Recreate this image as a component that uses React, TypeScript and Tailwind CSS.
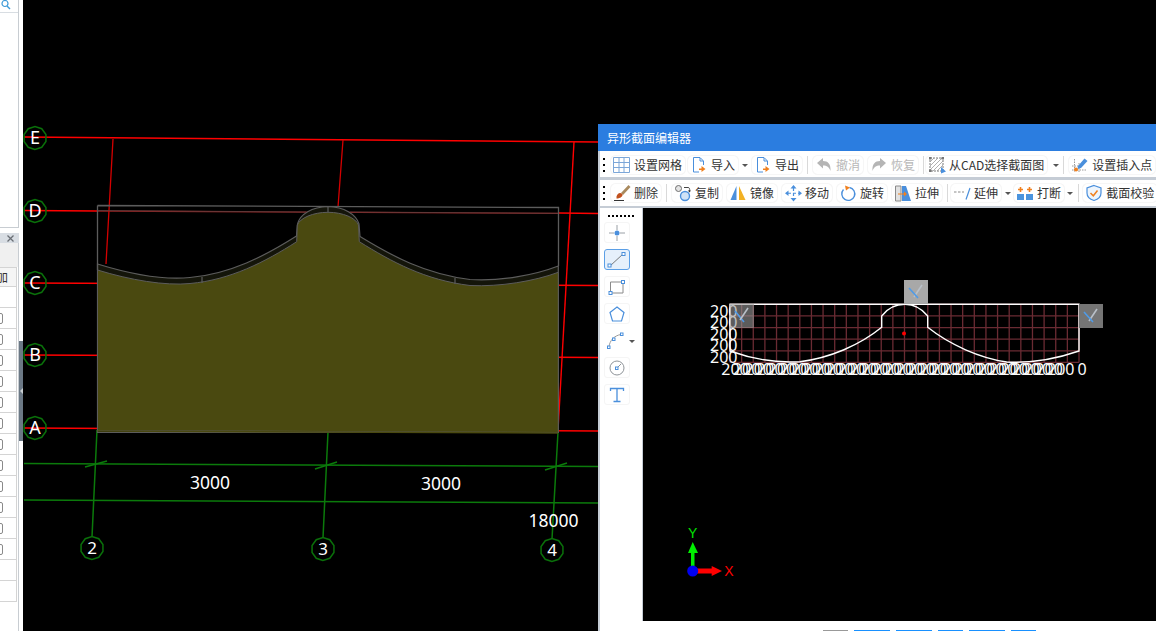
import React from "react";

const FONT = "[font-family:'Noto_Sans_CJK_SC','Noto_Sans',sans-serif]";
const BLUE = "#4a8fdc";
const ORANGE = "#f0801f";

function Ic({ children }: { children: React.ReactNode }) {
  return (
    <svg viewBox="0 0 16 16" className="block w-[16px] h-[16px] overflow-visible shrink-0">
      {children}
    </svg>
  );
}

const DocArrow = () => (
  <Ic>
    <path d="M2.5 .5H9L12.5 4V8M2.5 .5V15H8" fill="none" stroke={BLUE} />
    <path d="M9 1V4H12" fill="none" stroke={BLUE} />
    <path d="M8 11.5H10.5V9L14.5 12L10.5 15V13H8Z" fill={ORANGE} />
  </Ic>
);

const icons: Record<string, React.ReactNode> = {
  grid: (
    <Ic>
      <path d="M-.5 .5H15.5V15.5H-.5ZM5 .5V15.5M10 .5V15.5M-.5 5.5H15.5M-.5 10.5H15.5" fill="none" stroke="#7ba6d8" />
    </Ic>
  ),
  doc: <DocArrow />,
  undo: (
    <Ic>
      <path d="M1 6L7 1V4C12 4 15 7 14.5 14C13 10 11 8.5 7 8.5V11.5Z" fill="#b5b5b5" />
    </Ic>
  ),
  redo: (
    <Ic>
      <path d="M15 6L9 1V4C4 4 1 7 1.5 14C3 10 5 8.5 9 8.5V11.5Z" fill="#b5b5b5" />
    </Ic>
  ),
  cad: (
    <Ic>
      <path d="M1 1H14V14H1Z" fill="none" stroke="#7b7b7b" strokeDasharray="2 1" />
      <path d="M1 5L5 1M1 9L9 1M1 13L13 1M4 14L14 4M8 14L14 8" stroke="#9a9a9a" strokeWidth=".8" />
      <path d="M0 0h2.500v2.500H0ZM12.500 0H15v2.500h-2.500ZM0 12.500h2.500V15H0Z" fill="#777" />
      <path d="M12 10L17 14.500L12 16.500Z" fill={BLUE} />
    </Ic>
  ),
  insert: (
    <Ic>
      <path d="M2.500 2V15M7 6V15M0 9H10M0 13H14" stroke="#9a9a9a" strokeDasharray="1.500 1" />
      <path d="M6 9L12.500 1.500L15.500 4L9 11L5.500 12Z" fill={BLUE} />
      <circle cx="4" cy="12.500" r="2" fill={ORANGE} />
    </Ic>
  ),
  del: (
    <Ic>
      <path d="M7 8L14.500 0L16.500 2L9 10Z" fill="#a98a5e" />
      <path d="M2.500 11.500C3.500 8 6.500 7 8.500 9.500C9 11 6.500 13.500 2.500 13.500Z" fill="#c2521f" />
      <path d="M0 15.500H10" stroke="#333" />
    </Ic>
  ),
  copy: (
    <Ic>
      <circle cx="3.500" cy="3.500" r="3" fill="#e4e4e4" stroke="#6f6f6f" />
      <circle cx="10" cy="11" r="4.500" fill="#cfe2f6" stroke={BLUE} strokeWidth="1.400" />
      <path d="M9 2.500H13C14.500 2.500 15 4 14.500 6" fill="none" stroke="#444" />
      <path d="M12.800 5.500L14.500 7.500L16 5.500Z" fill="#333" />
    </Ic>
  ),
  mirror: (
    <Ic>
      <path d="M6.500 1L.5 15H6.500Z" fill={BLUE} />
      <path d="M9 1L15.500 15H9Z" fill="#f2b124" />
    </Ic>
  ),
  move: (
    <Ic>
      <path d="M8.500 0L11.500 3.500H5.500ZM8.500 16.500L5.500 13H11.500ZM0 8.250L3.500 5.500V11ZM17 8.250L13.500 5.500V11Z" fill={BLUE} />
      <path d="M8.500 3V13.500M3 8.250H14" stroke={BLUE} strokeWidth="1.200" strokeDasharray="3 2" />
    </Ic>
  ),
  rotate: (
    <Ic>
      <path d="M9.500 2.500A6.500 6.500 0 1 1 3.500 4.500" fill="none" stroke={BLUE} strokeWidth="1.400" />
      <path d="M5 .5L10 2.500L6 5.500Z" fill={ORANGE} />
    </Ic>
  ),
  stretch: (
    <Ic>
      <path d="M.5 1H6V16H.5Z" fill="#e2e2e2" stroke="#8a8a8a" />
      <path d="M7 1H11L16 16H7Z" fill={BLUE} />
      <path d="M3 8.500H9V6.500L12 9L9 11.500V9.500H3Z" fill={ORANGE} />
    </Ic>
  ),
  extend: (
    <Ic>
      <path d="M0 7H10" stroke="#8a8a8a" strokeDasharray="2.500 1.500" />
      <path d="M12 14.500L16 3" stroke={BLUE} strokeWidth="1.200" />
    </Ic>
  ),
  breakIc: (
    <Ic>
      <path d="M0 9H7V15H0ZM9 9H16V15H9Z" fill="#4a94de" />
      <path d="M3.500 2V7M1 4.500H6M12.500 2V7M10 4.500H15" stroke={ORANGE} strokeWidth="1.600" />
    </Ic>
  ),
  shield: (
    <Ic>
      <path d="M8 .5L15 3V8C15 12 11.500 14.500 8 15.500C4.500 14.500 1 12 1 8V3Z" fill="#eef5fc" stroke={BLUE} strokeWidth="1.200" />
      <path d="M4.500 8L7.300 10.800L11.500 5.500" fill="none" stroke={ORANGE} strokeWidth="1.500" />
    </Ic>
  ),
};

function Grip() {
  return (
    <div className="ml-[3px] w-[2px] h-[14px] flex flex-col justify-between shrink-0">
      <i className="block w-[2px] h-[2px] bg-black" />
      <i className="block w-[2px] h-[2px] bg-black" />
      <i className="block w-[2px] h-[2px] bg-black" />
    </div>
  );
}

function Btn({ icon, label, ml, muted }: { icon: string; label: string; ml: string; muted?: boolean }) {
  return (
    <div
      className={`${ml} h-[12px] flex items-center gap-[4px] shrink-0 rounded-[2px] shadow-[0_0_0_3px_#fff,0_0_0_4px_#f6f6f6] whitespace-nowrap text-[12px] leading-none ${muted ? "text-[#b8b8b8]" : "text-[#333]"}`}
    >
      {icons[icon]}
      <span>{label}</span>
    </div>
  );
}

function Caret({ ml }: { ml: string }) {
  return <div className={`${ml} w-0 h-0 border-x-[3px] border-x-transparent border-t-[3px] border-t-[#555] shrink-0`} />;
}

function Sep({ ml }: { ml: string }) {
  return <div className={`${ml} w-px h-[18px] bg-[#d9d9d9] shrink-0`} />;
}

function SideBtn({ children, active, bare }: { children: React.ReactNode; active?: boolean; bare?: boolean }) {
  return (
    <div
      className={`relative w-[26px] h-[21px] rounded-[3px] flex items-center justify-center ${active ? "bg-[#e6f0fb] border border-[#5b9fe6]" : bare ? "" : "border border-[#f5f5f5]"}`}
    >
      {children}
    </div>
  );
}

function Handle({ x, y, fill }: { x: number; y: number; fill: string }) {
  return (
    <g>
      <rect x={x} y={y} width="24" height="24" fill={fill} />
      <path d={`M${x + 10} ${y + 17}L${x + 18} ${y + 5}`} stroke="#b9c0c8" strokeWidth="1.600" />
      <path d={`M${x + 5} ${y + 8}L${x + 14} ${y + 18}`} stroke="#4f9be8" strokeWidth="1.600" />
    </g>
  );
}

function Badge({ x, y, r, label, size }: { x: number; y: number; r: number; label: string; size: number }) {
  const pts = Array.from({ length: 10 }, (_, i) => {
    const a = (Math.PI * 2 * i) / 10 + Math.PI / 2;
    return `${x + r * Math.cos(a)},${y + r * Math.sin(a)}`;
  }).join(" ");
  return (
    <g>
      <polygon points={pts} fill="none" stroke="#0a700a" strokeWidth="1.500" />
      <text x={x} y={y + size * 0.36} fontSize={size} fill="#fff" textAnchor="middle" fontFamily="'Noto Sans',sans-serif">
        {label}
      </text>
    </g>
  );
}

function MainCanvas() {
  const red = "#ff0000";
  const green = "#0b7a0b";
  const gray = "#5c5c5c";
  return (
    <svg viewBox="23 0 1133 631" className="block w-full h-full">
      {/* red grid */}
      <g stroke={red} strokeWidth="1.500" fill="none">
        <path d="M24 137L598 142" />
        <path d="M24 210.500L97 211M559 213L598 213.500" />
        <path d="M24 283L598 285.500" />
        <path d="M24 355L598 357.500" />
        <path d="M24 428L598 431" />
      </g>
      <path d="M97 211L558 213.300" stroke="#8e1f1f" strokeWidth="1.300" />
      <path d="M113 139L106 264M343 140L338 207" stroke="#d40000" strokeWidth="1.300" />
      <path d="M574 142L558 431" stroke={red} strokeWidth="1.400" />

      {/* green axes */}
      <g stroke={green} strokeWidth="1.500" fill="none">
        <path d="M24 463.500L598 466.500M24 500L598 503" />
        <path d="M97 430L92 537M328 432L323 538M558 432L552 539" />
        <path d="M85 467L107 461M315 469L337 462M545 470L567 463" />
      </g>

      {/* section body */}
      <path
        d="M97.500 264C130 274 165 280 190 277.500C230 274 265 256 296.500 236L297.500 224C300 214 312 207 328 206.500C344 207 356 214 359 224L360 236.500C392 256 425 274 470 279.500C500 281.500 535 275 558.300 266V432.500H97.500Z"
        fill="#14150a"
        stroke={gray}
        strokeWidth="1.200"
      />
      <path
        d="M97.500 270C130 280 165 286 190 283.500C230 280 265 262 296.700 241.700L297.300 225C300 218 313 212.300 328 212.300C343 212.300 356 218 358.500 225L359.300 241.700C392 262 425 280 470 285.500C500 287 535 281 558.300 272.300V432.500L97.500 430.500Z"
        fill="#4a4910"
        stroke={gray}
        strokeWidth="1"
      />
      <path d="M97.500 431L558 433" stroke="#4a4910" strokeWidth="1.400" />
      <path d="M97.500 205.500L558.500 207.500V266M97.500 205.500V270" fill="none" stroke={gray} strokeWidth="1.300" />
      <path d="M97.500 210.500L306 212M350 212L558 213.300" fill="none" stroke="#5a4040" strokeWidth=".8" />
      <path d="M202 277V283M328 206.500V212M455 278V284" stroke={gray} strokeWidth="1.200" />

      {/* bubbles */}
      <Badge x={35} y={138} r={11.500} label="E" size={18} />
      <Badge x={35} y={211} r={11.500} label="D" size={18} />
      <Badge x={35} y={283} r={11.500} label="C" size={18} />
      <Badge x={35} y={355} r={11.500} label="B" size={18} />
      <Badge x={35} y={428} r={11.500} label="A" size={18} />
      <Badge x={92} y={548} r={11.500} label="2" size={17} />
      <Badge x={323} y={549} r={11.500} label="3" size={17} />
      <Badge x={552} y={550} r={11.500} label="4" size={17} />

      <g fill="#fff" fontSize="17.500" fontFamily="'Noto Sans',sans-serif" textAnchor="middle">
        <text x={210} y={489}>3000</text>
        <text x={441} y={490}>3000</text>
        <text x={553.500} y={527}>18000</text>
      </g>
    </svg>
  );
}

function SectionCanvas() {
  const step = 349 / 30;
  const top = 304.3;
  const vs = Array.from({ length: 31 }, (_, i) => 730 + i * step);
  const hs = Array.from({ length: 6 }, (_, i) => top + i * step);
  return (
    <svg viewBox="643 208 513 413" className="block w-full h-full">
      <g stroke="#6a2b33" strokeWidth="1.300">
        {vs.map((x) => (
          <line key={x} x1={x} x2={x} y1={top} y2={hs[5]} />
        ))}
        {hs.map((y) => (
          <line key={y} x1={730} x2={1079} y1={y} y2={y} />
        ))}
      </g>
      <circle cx={904} cy={333.500} r={2} fill="#ff0000" />
      <g fill="#fff" fontSize="16" fontFamily="'Noto Sans',sans-serif" opacity=".99">
        {[0, 1, 2, 3, 4].map((i) => (
          <text key={i} x={737.500} y={316.500 + i * step} textAnchor="end">
            200
          </text>
        ))}
        {Array.from({ length: 29 }, (_, i) => (
          <text key={i} x={735 + i * step} y={374.500} textAnchor="middle">
            200
          </text>
        ))}
        <text x={1082} y={374.500} textAnchor="middle">
          0
        </text>
      </g>
      <path
        d="M730 304.300H1079V351C1050 361 1025 363 1006.700 362C980 358 950 345 927.700 327.300V316C922 309 914 304.300 905 304.300C895 304.300 887 309 881.700 316V327.300C860 345 830 358 800 361.700C780 363 755 360 730 351Z"
        fill="none"
        stroke="#fff"
        strokeWidth="1.400"
      />
      <Handle x={904} y={280} fill="#a8a8a8" />
      <rect x={730} y={304} width={24} height={24} fill="#9a9a9a" fillOpacity=".6" />
      <path d="M735 311L744 322" stroke="#4f9be8" strokeWidth="1.600" />
      <path d="M740 320L748 308" stroke="#b9c0c8" strokeWidth="1.600" />
      <Handle x={1079} y={304} fill="#757575" />

      {/* axis triad */}
      <rect x={691} y={553} width={3.500} height={16} fill="#00ee00" />
      <path d="M688 553L692.700 542L698 553Z" fill="#00ee00" />
      <rect x={695} y={568.500} width={17} height={5} fill="#ff0000" />
      <path d="M711.700 566L722 571L711.700 576Z" fill="#ff0000" />
      <circle cx={692.700} cy={571} r={5.500} fill="#0000f0" />
      <text x={692.700} y={538} fontSize="14" fill="#00e000" textAnchor="middle" fontFamily="'Liberation Sans',sans-serif">
        Y
      </text>
      <text x={729} y={576} fontSize="14" fill="#ff0000" textAnchor="middle" fontFamily="'Liberation Sans',sans-serif">
        X
      </text>
    </svg>
  );
}

function LeftPanel() {
  const rows = Array.from({ length: 15 }, (_, i) => i);
  return (
    <aside className="relative w-[23px] h-full bg-white shrink-0 flex flex-col overflow-hidden">
      <div className="w-[19px] h-[228px] border-r border-b border-[#c8cdd2] shrink-0">
        <div className="h-[13px] border-b border-[#d8dde2] pl-[1px] overflow-hidden">
          <svg viewBox="0 0 10 10" className="block w-[10px] h-[10px]">
            <circle cx="4" cy="3.500" r="3" fill="none" stroke="#3f9bd8" strokeWidth="1.200" />
            <path d="M6 6L9 9" stroke="#3f9bd8" strokeWidth="1.400" />
          </svg>
        </div>
      </div>
      <div className="mt-[5px] w-[19px] h-[10px] bg-[#d8dde3] shrink-0 flex items-center justify-end pr-[5px]">
        <svg viewBox="0 0 7 7" className="block w-[7px] h-[7px]">
          <path d="M.5 .5L6.500 6.500M6.500 .5L.5 6.500" stroke="#6a6f75" strokeWidth="1.300" />
        </svg>
      </div>
      <div className="w-[19px] flex-1 border-r border-[#c8cdd2] flex flex-col">
        <div className="h-[24px] bg-[#f0f0f0] shrink-0" />
        <div className="w-[17px] h-[20px] border-y border-r border-[#d4d4d4] bg-[#f5f5f5] shrink-0 overflow-hidden flex items-center justify-end text-[12px] leading-none text-[#333]">
          <span className="-ml-[5px] pr-[8px]">加</span>
        </div>
        {rows.map((i) => (
          <div key={i} className="w-[17px] h-[21px] border-b border-r border-[#d4d4d4] shrink-0 flex items-center overflow-hidden">
            {i > 0 && i < 13 && <div className="-ml-[9px] w-[12px] h-[11px] rounded-[2px] border border-[#8a8a8a]" />}
          </div>
        ))}
      </div>
      <div className="absolute left-[19px] top-[341px] w-[4px] h-[100px] bg-[#6b7885] flex items-center justify-center">
        <div className="w-0 h-0 border-y-[3px] border-y-transparent border-r-[3px] border-r-[#c8cdd2]" />
      </div>
    </aside>
  );
}

function Dialog() {
  return (
    <section className={`absolute left-[598px] top-[124px] w-[558px] h-[507px] bg-white flex flex-col overflow-hidden ${FONT}`}>
      <header className="h-[27px] bg-[#2b7de0] text-white text-[12px] flex items-center pl-[9px] shrink-0">异形截面编辑器</header>

      <div className="h-[26px] pt-[2px] flex items-center shrink-0 border-l-2 border-[#c5ccd5]">
        <Grip />
        <Btn icon="grid" label="设置网格" ml="ml-[9px]" />
        <Btn icon="doc" label="导入" ml="ml-[9px]" />
        <Caret ml="ml-[7px]" />
        <Btn icon="doc" label="导出" ml="ml-[7px]" />
        <Sep ml="ml-[8px]" />
        <Btn icon="undo" label="撤消" ml="ml-[8px]" muted />
        <Btn icon="redo" label="恢复" ml="ml-[11px]" muted />
        <Sep ml="ml-[8px]" />
        <Btn icon="cad" label="从CAD选择截面图" ml="ml-[5px]" />
        <Caret ml="ml-[9px]" />
        <Sep ml="ml-[4px]" />
        <Btn icon="insert" label="设置插入点" ml="ml-[8px]" />
      </div>
      <div className="h-[3px] bg-[#c5ccd5] shrink-0" />

      <div className="h-[26px] flex items-center shrink-0 border-l-2 border-[#c5ccd5]">
        <Grip />
        <Btn icon="del" label="删除" ml="ml-[9px]" />
        <Sep ml="ml-[8px]" />
        <Btn icon="copy" label="复制" ml="ml-[8px]" />
        <Btn icon="mirror" label="镜像" ml="ml-[11px]" />
        <Btn icon="move" label="移动" ml="ml-[11px]" />
        <Btn icon="rotate" label="旋转" ml="ml-[11px]" />
        <Btn icon="stretch" label="拉伸" ml="ml-[11px]" />
        <Sep ml="ml-[8px]" />
        <Btn icon="extend" label="延伸" ml="ml-[6px]" />
        <Caret ml="ml-[7px]" />
        <Btn icon="breakIc" label="打断" ml="ml-[6px]" />
        <Caret ml="ml-[6px]" />
        <Sep ml="ml-[5px]" />
        <Btn icon="shield" label="截面校验" ml="ml-[7px]" />
      </div>
      <div className="h-[2px] bg-[#c5ccd5] shrink-0" />

      <div className="flex-1 min-h-0 flex border-l-2 border-[#c5ccd5]">
        <div className="w-[43px] shrink-0 bg-white border-r border-[#c5ccd5] flex flex-col items-start pl-[4px] gap-[6px]">
          <div className="mt-[7px] -mb-px ml-[4px] w-[26px] h-0 border-t-2 border-dotted border-black" />
          <SideBtn>
            <svg viewBox="0 0 16 16" className="block w-[16px] h-[16px]">
              <path d="M8 0V5M8 11V16M0 8H5M11 8H16" stroke="#9aa0a6" />
              <circle cx="8" cy="8" r="2.500" fill={BLUE} />
            </svg>
          </SideBtn>
          <SideBtn active>
            <svg viewBox="0 0 20 18" className="block w-[20px] h-[18px]">
              <path d="M3 15L16 3" stroke="#777" />
              <rect x="1" y="13" width="3" height="3" fill="#fff" stroke={BLUE} />
              <rect x="15" y="1.500" width="3" height="3" fill="#fff" stroke={BLUE} />
            </svg>
          </SideBtn>
          <SideBtn>
            <svg viewBox="0 0 20 18" className="block w-[20px] h-[18px]">
              <path d="M3.500 4H16V15H3.500Z" fill="none" stroke="#8a8a8a" />
              <rect x="2" y="13.500" width="3" height="3" fill="#fff" stroke={BLUE} />
              <rect x="14.500" y="2.500" width="3" height="3" fill="#fff" stroke={BLUE} />
            </svg>
          </SideBtn>
          <SideBtn>
            <svg viewBox="0 0 16 16" className="block w-[16px] h-[16px]">
              <path d="M8 1L15 6.500L12.500 15H3.500L1 6.500Z" fill="none" stroke={BLUE} strokeWidth="1.200" />
            </svg>
          </SideBtn>
          <SideBtn bare>
            <svg viewBox="0 0 20 18" className="block w-[20px] h-[18px] -ml-[2px]">
              <path d="M3 15C3.500 9 8 3.500 15 2.500" fill="none" stroke="#9a9a9a" />
              <rect x="1.500" y="14" width="2.500" height="2.500" fill="#fff" stroke={BLUE} />
              <rect x="6.500" y="6" width="2.500" height="2.500" fill="#fff" stroke={BLUE} />
              <rect x="14.500" y="1" width="2.500" height="2.500" fill="#fff" stroke={BLUE} />
            </svg>
            <div className="absolute left-[25px] top-[10px] w-0 h-0 border-x-[3px] border-x-transparent border-t-[3px] border-t-[#555]" />
          </SideBtn>
          <SideBtn>
            <svg viewBox="0 0 16 16" className="block w-[16px] h-[16px]">
              <circle cx="8" cy="8" r="7" fill="none" stroke="#8f9499" />
              <path d="M8 8L12 4" stroke="#8f9499" />
              <rect x="6.500" y="7" width="2.500" height="2.500" fill="#fff" stroke={BLUE} />
            </svg>
          </SideBtn>
          <SideBtn>
            <svg viewBox="0 0 16 16" className="block w-[16px] h-[16px]">
              <path d="M1.500 4V1.500H14.500V4M8 1.500V14.500M4.500 14.500H11.500" fill="none" stroke={BLUE} strokeWidth="1.300" />
            </svg>
          </SideBtn>
        </div>
        <div className="flex-1 min-w-0 bg-black">
          <SectionCanvas />
        </div>
      </div>

      <footer className="h-[10px] shrink-0 bg-white flex items-start gap-[6px] pl-[223px] pt-[9px] border-l-2 border-[#c5ccd5]">
        <div className="w-[25px] h-[30px] border-t border-[#999] shrink-0" />
        <div className="w-[36px] h-[30px] border-t border-[#1890ff] shrink-0" />
        <div className="w-[36px] h-[30px] border-t border-[#1890ff] shrink-0" />
        <div className="w-[25px] h-[30px] border-t border-[#1890ff] shrink-0" />
        <div className="w-[36px] h-[30px] border-t border-[#1890ff] shrink-0" />
        <div className="w-[25px] h-[30px] border-t border-[#1890ff] shrink-0" />
      </footer>
    </section>
  );
}

export default function App() {
  return (
    <div className={`relative w-[1156px] h-[631px] overflow-hidden flex bg-black ${FONT}`}>
      <LeftPanel />
      <main className="flex-1 min-w-0 bg-black">
        <MainCanvas />
      </main>
      <Dialog />
    </div>
  );
}
